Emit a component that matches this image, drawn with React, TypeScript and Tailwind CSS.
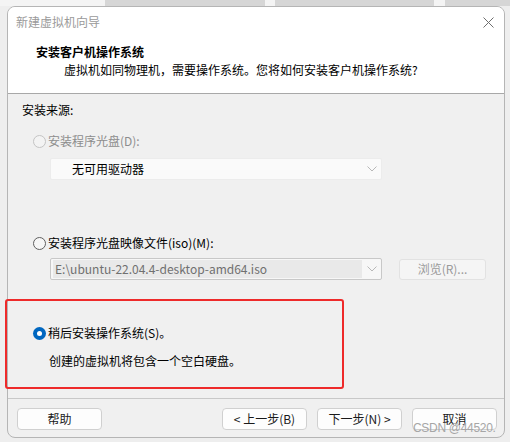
import React from "react";

const font = { fontFamily: '"Noto Sans CJK SC", "Noto Sans", sans-serif' };

function Radio({ checked, disabled }: { checked?: boolean; disabled?: boolean }) {
  if (checked) {
    return (
      <span className="w-[13px] h-[13px] rounded-full bg-[#0067c0] flex items-center justify-center shrink-0">
        <span className="w-[5px] h-[5px] rounded-full bg-white" />
      </span>
    );
  }
  return (
    <span
      className={
        "w-[13px] h-[13px] rounded-full border shrink-0 " +
        (disabled ? "border-[#c4c4c4] bg-[#f3f3f3]" : "border-[#5f5f5f] bg-[#f6f6f6]")
      }
    />
  );
}

function Chevron({ color }: { color: string }) {
  return (
    <svg width="10" height="6" viewBox="0 0 10 6" className="shrink-0">
      <path d="M0.5 0.5 L5 5 L9.5 0.5" fill="none" stroke={color} strokeWidth="1" />
    </svg>
  );
}

function Btn({ children }: { children: React.ReactNode }) {
  return (
    <div className="w-[85px] h-[22px] rounded-[4px] border border-[#d0d0d0] bg-[#fdfdfd] flex items-center justify-center text-[12px] text-[#1a1a1a] leading-none">
      {children}
    </div>
  );
}

export default function App() {
  return (
    <div className="w-[510px] h-[442px] bg-[#eeeeee] relative overflow-hidden" style={font}>
      <div className="h-[6px] flex">
        <div className="w-[105px] bg-[#f4f4f4]" />
        <div className="w-[160px] bg-[#d6d6d6]" />
        <div className="w-[10px] bg-[#f4f4f4]" />
        <div className="w-[159px] bg-[#d6d6d6]" />
        <div className="w-[11px] bg-[#f4f4f4]" />
        <div className="flex-1 bg-[#d6d6d6]" />
      </div>
      <div className="ml-[7px] w-[498px] h-[432px] rounded-[8px] border border-[#b5b5b5] bg-[#f0f0f0] flex flex-col overflow-hidden">
        {/* title bar */}
        <div className="h-[30px] bg-white flex items-center pl-[8px] pr-[10px] shrink-0">
          <span className="text-[12px] text-[#9a9a9a] leading-[16px]">新建虚拟机向导</span>
          <div className="ml-auto">
            <svg width="11" height="11" viewBox="0 0 11 11">
              <path d="M0.5 0.5 L10.5 10.5 M10.5 0.5 L0.5 10.5" stroke="#6e6e6e" strokeWidth="1" />
            </svg>
          </div>
        </div>
        {/* header */}
        <div className="h-[56px] bg-white shrink-0 pt-[7px] text-[12px] leading-[16px] text-black">
          <div className="pl-[28px] font-bold">安装客户机操作系统</div>
          <div className="pl-[56px] mt-[2px]">虚拟机如同物理机，需要操作系统。您将如何安装客户机操作系统?</div>
        </div>
        <div className="h-px bg-[#a8a8a8] shrink-0" />
        {/* body */}
        <div className="h-[304px] shrink-0 text-[12px] leading-[16px]">
          <div className="pl-[14px] pt-[8px] text-black">安装来源:</div>
          <div className="pl-[25px] mt-[15px] flex items-center gap-[2px] text-[#8d8d8d]">
            <Radio disabled />
            <span>安装程序光盘(D):</span>
          </div>
          <div className="ml-[42px] mt-[9px] w-[332px] h-[22px] bg-[#fafafa] border border-[#ececec] rounded-[2px] flex items-center pl-[21px] pr-[4px]">
            <span className="text-black">无可用驱动器</span>
            <span className="ml-auto"><Chevron color="#b8b8b8" /></span>
          </div>
          <div className="pl-[25px] mt-[55px] flex items-center gap-[2px] text-black">
            <Radio />
            <span>安装程序光盘映像文件(iso)(M):</span>
          </div>
          <div className="mt-[7px] flex items-center">
            <div className="ml-[42px] w-[332px] h-[22px] bg-[#f7f7f7] border border-[#c8c8c8] rounded-[2px] flex items-center pl-[2px] pr-[4px] py-[1px]">
              <div className="w-[309px] h-[18px] bg-[#e9e9e9] flex items-center pl-[2px] text-[#707070]">
                E:\ubuntu-22.04.4-desktop-amd64.iso
              </div>
              <span className="ml-auto"><Chevron color="#b8b8b8" /></span>
            </div>
            <div className="ml-[17px] w-[87px] h-[21px] rounded-[3px] border border-[#e2e2e2] bg-[#f5f5f5] flex items-center justify-center text-[#9a9a9a]">
              浏览(R)...
            </div>
          </div>
          <div className="pl-[25px] mt-[45px] flex items-center gap-[2px] text-black">
            <Radio checked />
            <span>稍后安装操作系统(S)。</span>
          </div>
          <div className="pl-[41px] mt-[12px] text-black">创建的虚拟机将包含一个空白硬盘。</div>
        </div>
        <div className="h-px bg-[#c8c8c8] shrink-0" />
        {/* footer */}
        <div className="flex-1 pt-[9px] pl-[9px] flex">
          <Btn>帮助</Btn>
          <div className="ml-[120px] flex gap-[10px]">
            <Btn>&lt; 上一步(B)</Btn>
            <Btn>下一步(N) &gt;</Btn>
            <Btn>取消</Btn>
          </div>
        </div>
      </div>
      {/* annotation overlay */}
      <div className="absolute left-[5px] top-[299px] w-[339px] h-[90px] border-[2px] border-[#ee2a2a] rounded-[3px]" />
      <div className="absolute left-[413px] top-[420px] text-[12px] leading-[16px] text-[#a6a6a6] tracking-[-0.3px]" style={{ fontFamily: '"Liberation Sans", sans-serif' }}>
        CSDN @44520.
      </div>
    </div>
  );
}
